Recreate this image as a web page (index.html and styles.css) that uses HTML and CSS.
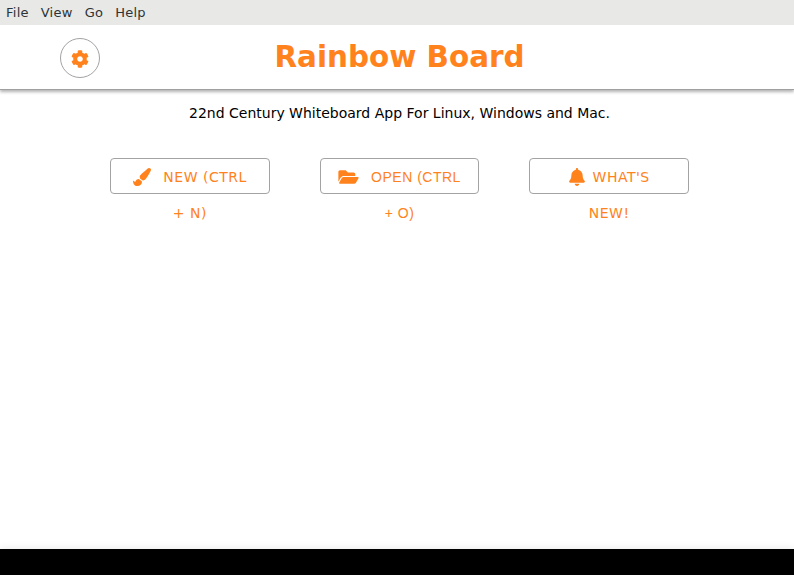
FILE: index.html
```html
<!DOCTYPE html>
<html lang="en">
<head>
<meta charset="utf-8">
<title>Rainbow Board</title>
<link rel="stylesheet" href="styles.css">
</head>
<body>
<nav class="menubar"><span>File</span><span>View</span><span>Go</span><span>Help</span></nav>
<header class="header">
  <button class="settings" aria-label="Settings"><svg class="cog" viewBox="0 0 512 512"><path d="M487.4 315.7l-42.6-24.6c4.3-23.2 4.3-47 0-70.2l42.6-24.6c4.9-2.8 7.1-8.6 5.5-14-11.1-35.6-30-67.8-54.7-94.6-3.8-4.1-10-5.1-14.8-2.3L380.8 110c-17.9-15.4-38.5-27.3-60.8-35.1V25.8c0-5.6-3.9-10.5-9.4-11.7-36.7-8.2-74.3-7.8-109.2 0-5.5 1.2-9.4 6.1-9.4 11.7V75c-22.2 7.9-42.8 19.8-60.8 35.1L88.7 85.5c-4.9-2.8-11-1.9-14.8 2.3-24.7 26.7-43.6 58.9-54.7 94.6-1.7 5.4.6 11.2 5.5 14L67.3 221c-4.3 23.2-4.3 47 0 70.2l-42.6 24.6c-4.9 2.8-7.1 8.6-5.5 14 11.1 35.6 30 67.8 54.7 94.6 3.8 4.1 10 5.1 14.8 2.3l42.6-24.6c17.9 15.4 38.5 27.3 60.8 35.1v49.2c0 5.6 3.9 10.5 9.4 11.7 36.7 8.2 74.3 7.8 109.2 0 5.5-1.2 9.4-6.1 9.4-11.7v-49.2c22.2-7.9 42.8-19.8 60.8-35.1l42.6 24.6c4.9 2.8 11 1.9 14.8-2.3 24.7-26.7 43.6-58.9 54.7-94.6 1.5-5.5-.7-11.3-5.6-14.1zM256 336c-44.1 0-80-35.9-80-80s35.9-80 80-80 80 35.9 80 80-35.9 80-80 80z"/></svg></button>
  <h1 class="title">Rainbow Board</h1>
</header>
<main class="main">
  <p class="tagline">22nd Century Whiteboard App For Linux, Windows and Mac.</p>
  <div class="actions">
    <div class="btn">
      <div class="line"><svg class="brush" viewBox="0 0 512 512"><path d="M167.02 309.34c-40.12 2.58-76.53 17.86-97.19 72.3-2.35 6.21-8 9.98-14.59 9.98-11.11 0-45.46-27.67-55.25-34.35C0 439.62 37.93 512 128 512c75.86 0 128-43.77 128-120.19 0-3.11-.65-6.08-.97-9.13l-88.01-73.34zM457.89 0c-15.16 0-29.37 6.71-40.21 16.45C213.27 199.05 192 203.34 192 257.09c0 13.7 3.25 26.76 8.73 38.7l63.82 53.18c7.21 1.8 14.64 3.03 22.39 3.03 62.11 0 98.11-45.47 211.16-256.46 7.38-14.35 13.9-29.85 13.9-45.99C512 20.64 486 0 457.89 0z"/></svg><span>NEW (CTRL</span></div>
      <div class="line">+ N)</div>
    </div>
    <div class="btn btn-open">
      <div class="line"><svg class="folder" viewBox="0 0 576 512"><path d="M572.694 292.093L500.27 416.248A63.997 63.997 0 0 1 444.989 448H45.025c-18.523 0-30.064-20.093-20.731-36.093l72.424-124.155A64 64 0 0 1 152 256h399.964c18.523 0 30.064 20.093 20.73 36.093zM152 224h328v-48c0-26.51-21.49-48-48-48H272l-64-64H48C21.49 64 0 85.49 0 112v278.046l69.077-118.418C86.214 242.25 117.989 224 152 224z"/></svg><span>OPEN (CTRL</span></div>
      <div class="line">+ O)</div>
    </div>
    <div class="btn">
      <div class="line"><svg class="bell" viewBox="0 0 448 512"><path d="M224 512c35.32 0 63.97-28.65 63.97-64H160.03c0 35.35 28.65 64 63.97 64zm215.39-149.71c-19.32-20.76-55.47-51.99-55.47-154.29 0-77.7-54.48-139.9-127.94-155.16V32c0-17.67-14.32-32-31.98-32s-31.98 14.33-31.98 32v20.84C118.56 68.1 64.08 130.3 64.08 208c0 102.3-36.15 133.53-55.47 154.29-6 6.45-8.66 14.16-8.61 21.71.11 16.4 12.98 32 32.1 32h383.8c19.12 0 32-15.6 32.1-32 .05-7.55-2.61-15.27-8.61-21.71z"/></svg><span>WHAT'S</span></div>
      <div class="line">NEW!</div>
    </div>
  </div>
</main>
<footer class="footer"></footer>
</body>
</html>
```
FILE: styles.css
```css
* { box-sizing: border-box; }
body {
  margin: 0;
  height: 575px;
  overflow: hidden;
  display: flex;
  flex-direction: column;
  background: #fff;
  font-family: "DejaVu Sans", sans-serif;
}
svg { fill: #ff821c; flex: none; }
.menubar {
  height: 25px;
  padding: 0 6px;
  display: flex;
  gap: 12px;
  background: #e8e8e7;
  color: #2e3436;
  font-size: 13px;
  letter-spacing: .25px;
  line-height: 25px;
}
.header {
  height: 65px;
  display: grid;
  grid-template-columns: 100px 1fr 95px;
  border-bottom: 1px solid #a0a0a0;
  box-shadow: 0 2px 3px rgba(0, 0, 0, .3);
  clip-path: inset(0 0 -8px 0);
}
.settings {
  width: 40px;
  height: 40px;
  margin: 13px 0 0 60px;
  padding: 2px 0 0;
  display: flex;
  align-items: center;
  justify-content: center;
  border: 1px solid #a3a3a3;
  border-radius: 50%;
  background: #fff;
}
.cog { width: 18px; height: 18px; }
.title {
  margin: 0;
  color: #ff821c;
  font-size: 29.4px;
  line-height: 64px;
  text-align: center;
}
.main { flex: 1; }
.tagline {
  margin: 14px 0 0 5px;
  color: #000;
  font-size: 14px;
  line-height: 18px;
  text-align: center;
}
.actions {
  margin: 36px 105px 0 110px;
  display: grid;
  grid-template-columns: repeat(3, 1fr);
  gap: 50px;
}
.btn {
  height: 36px;
  border: 1px solid #a3a3a3;
  border-radius: 4px;
  color: #ff821c;
  font-size: 14px;
  letter-spacing: .5px;
}
.btn-open { font-family: "Liberation Sans", sans-serif; }
.line {
  height: 36px;
  display: flex;
  align-items: center;
  justify-content: center;
  line-height: 36px;
}
.brush { width: 18px; height: 18px; margin-right: 12.5px; }
.folder { width: 21px; height: 18px; margin-right: 12px; }
.bell { width: 16px; height: 18px; margin-right: 8px; }
.footer {
  height: 26px;
  background: #000;
  box-shadow: 0 0 8px rgba(0, 0, 0, .1);
}
```
